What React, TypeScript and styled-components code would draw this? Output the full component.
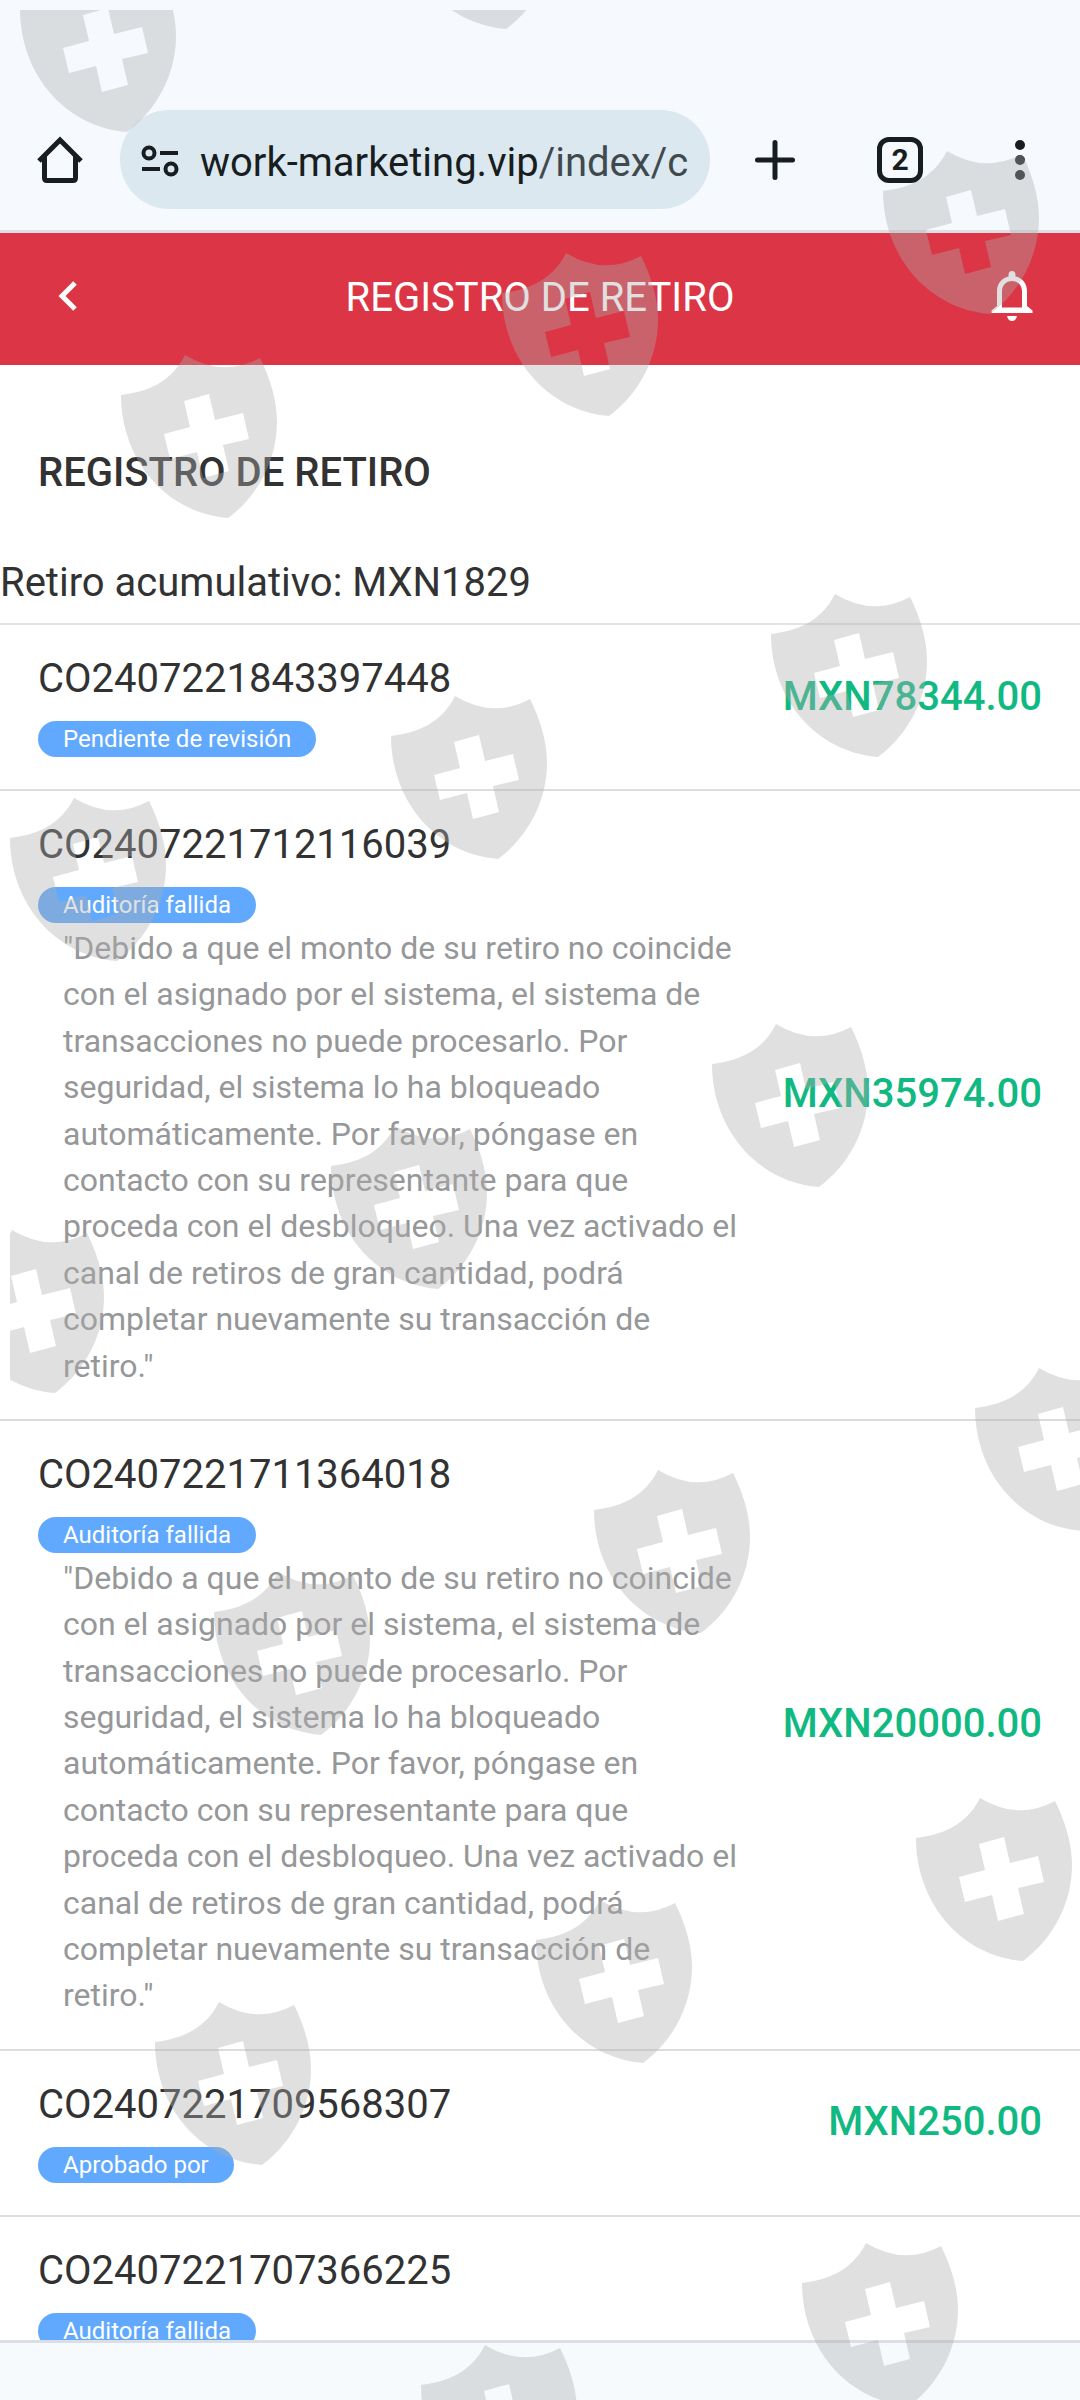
import React from "react";
import styled, { createGlobalStyle } from "styled-components";

const GlobalStyle = createGlobalStyle`
  *, *::before, *::after { box-sizing: border-box; }
  body { margin: 0; background: #fff; }
  body, button { font-family: Roboto, "Noto Sans", sans-serif; }
  h1, h2, p, ul { margin: 0; padding: 0; }
`;

const Screen = styled.div`
  position: relative;
  display: flex;
  flex-direction: column;
  height: 100vh;
  overflow: hidden;
  color: #323233;
  font-size: 40px;
  line-height: 60px;
`;

const BrowserBar = styled.header`
  display: flex;
  align-items: center;
  flex: none;
  padding: 110px 0 21px;
  background: #f6fafe;
  border-bottom: 3px solid #dcdfe4;
`;

const IconButton = styled.button<{ $width: number }>`
  display: flex;
  align-items: center;
  justify-content: center;
  flex: none;
  width: ${(p) => p.$width}px;
  height: 98px;
  padding: 0;
  border: 0;
  background: none;
  color: inherit;
  cursor: pointer;
`;

const BarButton = styled(IconButton)`
  color: #171d20;
`;

const NavButton = styled(IconButton)`
  padding-bottom: 4px;
`;

const AddressPill = styled.button`
  display: flex;
  align-items: center;
  gap: 20px;
  flex: 1;
  min-width: 0;
  height: 99px;
  padding: 2px 20px 0;
  border: 0;
  border-radius: 50px;
  background: #dbe8ef;
  color: #171d20;
  font-size: 40px;
  cursor: pointer;
`;

const Url = styled.span`
  padding-top: 3px;
  overflow: hidden;
  white-space: nowrap;
`;

const UrlPath = styled.span`
  color: #40494e;
`;

const TabCount = styled.span`
  display: flex;
  align-items: center;
  justify-content: center;
  width: 46px;
  height: 46px;
  border: 5px solid #171d20;
  border-radius: 12px;
  font-family: "Liberation Sans Narrow", Roboto, sans-serif;
  font-size: 30px;
  font-weight: 700;
  line-height: 36px;
`;

const NavBar = styled.nav`
  display: flex;
  align-items: center;
  flex: none;
  height: 132px;
  padding-bottom: 2px;
  background: #dc3545;
  color: #fff;
`;

const NavTitle = styled.h1`
  flex: 1;
  font-size: 40px;
  font-weight: 400;
  text-align: center;
`;

const Content = styled.main`
  flex: 1;
  min-height: 0;
  overflow: hidden;
  background: #fff;
`;

const SectionTitle = styled.h2`
  padding: 78px 38px 50px;
  font-size: 40px;
  font-weight: 500;
`;

const Total = styled.p`
  padding-bottom: 10px;
  border-bottom: 2px solid #e4e4e4;
`;

const Records = styled.ul`
  list-style: none;
`;

const Row = styled.li`
  display: flex;
  align-items: center;
  justify-content: space-between;
  padding: 11px 38px 32px;
  border-bottom: 2px solid #dcdddf;
`;

const Details = styled.div`
  display: flex;
  flex-direction: column;
  align-items: flex-start;
  width: 70%;
`;

const OrderId = styled.p`
  padding: 13px 0 12px;
`;

const Badge = styled.span`
  padding: 0 25px;
  border-radius: 18px;
  background: #60a9fe;
  color: #fff;
  font-size: 24px;
  line-height: 36px;
`;

const Reason = styled.p`
  margin: 2px 0 -2px;
  padding-left: 25px;
  color: #969799;
  font-size: 32px;
  line-height: 1.45;
`;

const Amount = styled.strong`
  color: #10b981;
  font-weight: 500;
`;

const SystemBar = styled.footer`
  flex: none;
  height: 60px;
  border-top: 3px solid #d9dfe4;
  background: #f6fafd;
`;

const Watermark = styled.svg`
  position: absolute;
  top: 10px;
  left: 10px;
  width: calc(100% - 10px);
  height: calc(100% - 10px);
  overflow: hidden;
  pointer-events: none;
`;

const HomeIcon = () => (
  <svg width="46" height="48" viewBox="0 0 46 48" fill="none" stroke="currentColor" strokeWidth="5" aria-hidden="true">
    <path d="M2 25 L23 4 L44 25" />
    <path d="M7.500 20 V42 Q7.500 44.500 10 44.500 H36 Q38.500 44.500 38.500 42 V20" />
  </svg>
);

const SiteIcon = () => (
  <svg width="40" height="32" viewBox="0 0 40 32" fill="none" stroke="currentColor" strokeWidth="4" aria-hidden="true">
    <circle cx="9" cy="8" r="5.500" />
    <path d="M20 8 H38" />
    <path d="M2 24 H20" />
    <circle cx="31" cy="24" r="5.500" />
  </svg>
);

const PlusIcon = () => (
  <svg width="40" height="40" viewBox="0 0 40 40" stroke="currentColor" strokeWidth="5" strokeLinecap="round" aria-hidden="true">
    <path d="M20 2.500 V37.500 M2.500 20 H37.500" />
  </svg>
);

const MenuIcon = () => (
  <svg width="12" height="42" viewBox="0 0 12 42" fill="currentColor" aria-hidden="true">
    <circle cx="6" cy="6" r="5" />
    <circle cx="6" cy="21" r="5" />
    <circle cx="6" cy="36" r="5" />
  </svg>
);

const BackIcon = () => (
  <svg width="20" height="32" viewBox="0 0 20 32" fill="none" stroke="currentColor" strokeWidth="5" aria-hidden="true">
    <path d="M17 3 L4 16 L17 29" />
  </svg>
);

const BellIcon = () => (
  <svg width="42" height="50" viewBox="0 0 42 50" fill="currentColor" aria-hidden="true">
    <path
      fillRule="evenodd"
      d="M17.500 5.500 V4 Q17.500 0 21 0 Q24.500 0 24.500 4 V5.500 C31 7 36 12.500 36 20 V35 L41.500 39.500 V42 H0.500 V39.500 L6 35 V20 C6 12.500 11 7 17.500 5.500 Z M21 10 C15 10 11 14.500 11 20.500 V36.500 H31 V20.500 C31 14.500 27 10 21 10 Z"
    />
    <path d="M16 45 H26 Q25 50 21 50 Q17 50 16 45 Z" />
  </svg>
);

const shields: [number, number][] = [
  [20, -32], [399, -135], [883, 150], [502, 252], [121, 354],
  [771, 593], [391, 695], [10, 797], [712, 1023], [331, 1125],
  [-52, 1229], [975, 1367], [594, 1469], [214, 1571], [916, 1797],
  [536, 1899], [155, 2001], [802, 2242], [421, 2344],
];

const ShieldWatermark = () => (
  <Watermark aria-hidden="true">
    <defs>
      <path
        id="shield"
        fillRule="evenodd"
        d="M0 40 C25 37 50 28 64 0 Q102 23 139 3 C149 23 156 45 156 67 C156 105 137 141 107 163 C45 158 0 105 0 40 Z M63 46 L88 39 L94 65 L122 58 L128 84 L102 90 L108 116 L82 123 L76 97 L49 104 L43 79 L69 72 Z"
      />
    </defs>
    <g transform="translate(-10 -9)" fill="#aeaeae" fillOpacity="0.38">
      {shields.map(([x, y]) => (
        <use key={`${x}:${y}`} href="#shield" x={x} y={y} />
      ))}
    </g>
  </Watermark>
);

const blockedReason =
  "\"Debido a que el monto de su retiro no coincide con el asignado por el sistema, el sistema de transacciones no puede procesarlo. Por seguridad, el sistema lo ha bloqueado automáticamente. Por favor, póngase en contacto con su representante para que proceda con el desbloqueo. Una vez activado el canal de retiros de gran cantidad, podrá completar nuevamente su transacción de retiro.\"";

interface Withdrawal {
  id: string;
  status: string;
  reason?: string;
  amount?: string;
}

const withdrawals: Withdrawal[] = [
  { id: "CO2407221843397448", status: "Pendiente de revisión", amount: "MXN78344.00" },
  { id: "CO2407221712116039", status: "Auditoría fallida", reason: blockedReason, amount: "MXN35974.00" },
  { id: "CO2407221711364018", status: "Auditoría fallida", reason: blockedReason, amount: "MXN20000.00" },
  { id: "CO2407221709568307", status: "Aprobado por", amount: "MXN250.00" },
  { id: "CO2407221707366225", status: "Auditoría fallida" },
];

export default function App() {
  return (
    <Screen>
      <GlobalStyle />
      <BrowserBar>
        <BarButton $width={120} aria-label="Inicio"><HomeIcon /></BarButton>
        <AddressPill>
          <SiteIcon />
          <Url>work-marketing.vip<UrlPath>/index/c</UrlPath></Url>
        </AddressPill>
        <BarButton $width={130} aria-label="Nueva pestaña"><PlusIcon /></BarButton>
        <BarButton $width={120}><TabCount>2</TabCount></BarButton>
        <BarButton $width={120} aria-label="Menú"><MenuIcon /></BarButton>
      </BrowserBar>
      <NavBar>
        <NavButton $width={136} aria-label="Volver"><BackIcon /></NavButton>
        <NavTitle>REGISTRO DE RETIRO</NavTitle>
        <NavButton $width={136} aria-label="Notificaciones"><BellIcon /></NavButton>
      </NavBar>
      <Content>
        <SectionTitle>REGISTRO DE RETIRO</SectionTitle>
        <Total>Retiro acumulativo: MXN1829</Total>
        <Records>
          {withdrawals.map((w) => (
            <Row key={w.id}>
              <Details>
                <OrderId>{w.id}</OrderId>
                <Badge>{w.status}</Badge>
                {w.reason && <Reason>{w.reason}</Reason>}
              </Details>
              {w.amount && <Amount>{w.amount}</Amount>}
            </Row>
          ))}
        </Records>
      </Content>
      <SystemBar />
      <ShieldWatermark />
    </Screen>
  );
}
